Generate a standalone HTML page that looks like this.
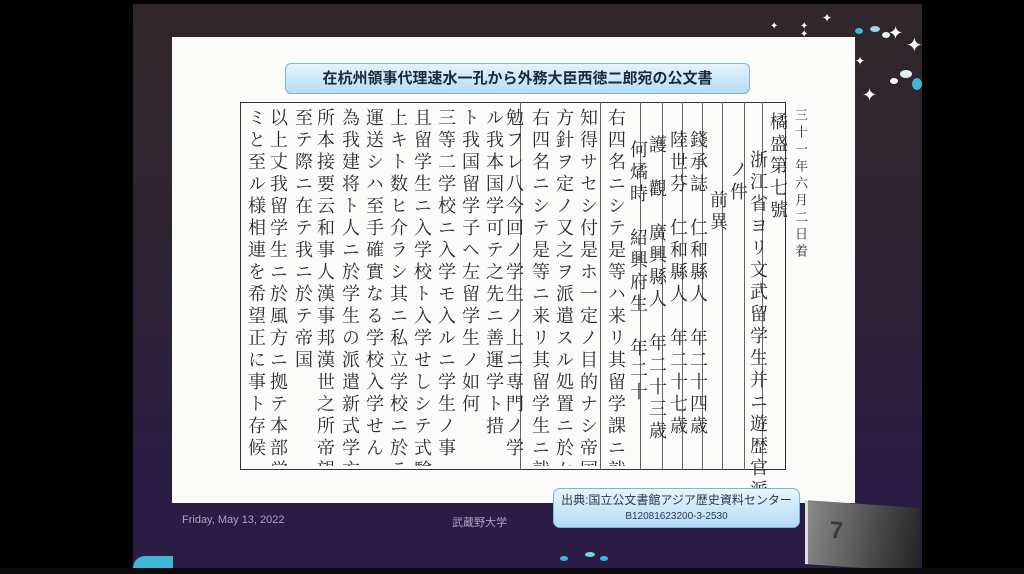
<!DOCTYPE html>
<html><head><meta charset="utf-8"><style>
*{margin:0;padding:0;box-sizing:border-box}
body{width:1024px;height:574px;overflow:hidden;background:#000;position:relative;font-family:"Liberation Sans","Noto Sans CJK JP",sans-serif}
.slide{position:absolute;left:133px;top:4px;width:789px;height:564px;background:linear-gradient(#2f2729 0%,#2d2430 40%,#2a1d42 80%,#2b1c45 100%)}
.doc{position:absolute;left:172px;top:37px;width:683px;height:466px;background:#fbfbfa}
.title{position:absolute;left:285px;top:63px;width:465px;height:31px;border:1px solid #7fb3d8;border-radius:6px;background:linear-gradient(#e6f3fc,#b5dcf4);font-weight:bold;font-size:15px;color:#1e2a3a;text-align:center;line-height:29px}
.frame{position:absolute;left:240px;top:102px;width:546px;height:368px;border:1px solid #333}
.col{position:absolute;top:108px;height:358px;writing-mode:vertical-rl;font-family:"Noto Serif CJK SC",serif;font-size:18px;color:#2a2a2a;letter-spacing:4px;overflow:hidden;white-space:nowrap}
.vl{position:absolute;top:102px;width:1px;height:368px;background:#666}
.foot{position:absolute;top:514px;font-size:11px;color:#a9a2c0}
.src{position:absolute;left:553px;top:488px;width:247px;height:40px;border:1px solid #7fb3d8;border-radius:7px;background:linear-gradient(#e8f4fc,#b4dbf3);text-align:center;color:#2b3a55;font-size:12px;line-height:15px;padding-top:4px}
.num{position:absolute;left:805px;top:504px;width:115px;height:64px;background:linear-gradient(100deg,#8a8a8a,#4a4a4a 60%,#222);border-left:3px solid #ddd;transform:skewY(4deg)}
.num span{position:absolute;left:22px;top:15px;font-size:24px;font-weight:bold;color:#3a3a3a}
.star{position:absolute;color:#fff;font-size:14px;line-height:1}
.dot{position:absolute;border-radius:50%;background:#3fb7d3}
</style></head><body>
<div class="slide"></div>
<div class="doc"></div>
<div class="title">在杭州領事代理速水一孔から外務大臣西徳二郎宛の公文書</div>
<div class="frame"></div>
<div class="vl" style="left:520px"></div><div class="vl" style="left:600px"></div><div class="vl" style="left:640px"></div><div class="vl" style="left:662px"></div><div class="vl" style="left:682px"></div><div class="vl" style="left:702px"></div><div class="vl" style="left:722px"></div><div class="vl" style="left:744px"></div><div class="vl" style="left:762px"></div>
<div class="col" style="left:244px">ミと至ル様相連を希望正に事ト存候</div>
<div class="col" style="left:266px">以上丈我留学生ニ於風方ニ拠テ本部学生</div>
<div class="col" style="left:291px">至テ際ニ在テ我ニ於テ帝国</div>
<div class="col" style="left:313px">所本接要云和事人漢事邦漢世之所帝望</div>
<div class="col" style="left:338px">為我建将ト人ニ於学生の派遣新式学方</div>
<div class="col" style="left:362px">運送シハ至手確實なる学校入学せん</div>
<div class="col" style="left:386px">上キト数ヒ介ラシ其ニ私立学校ニ於テ</div>
<div class="col" style="left:410px">且留学生ニ入学校ト入学せしシテ式験</div>
<div class="col" style="left:434px">三等二学校ニ入学モ入ルニ学生ノ事</div>
<div class="col" style="left:458px">ト我国留学子ヘ左留学生ノ如何</div>
<div class="col" style="left:482px">ル我本国学可テ之先ニ善運学ト措</div>
<div class="col" style="left:502px">勉フレ八今回ノ学生ノ上ニ専門ノ学</div>
<div class="col" style="left:528px">右四名ニシテ是等ニ来リ其留学生ニ就テ</div>
<div class="col" style="left:552px">方針ヲ定ノ又之ヲ派遣スル処置ニ於ケ外国</div>
<div class="col" style="left:576px">知得サセシ付是ホ一定ノ目的ナシ帝国</div>
<div class="col" style="left:604px">右四名ニシテ是等ハ来リ其留学課ニ就テ</div>
<div class="col" style="left:626px;top:140px">何燏時　紹興府生　年二十</div>
<div class="col" style="left:645px;top:135px">護　觀　廣興縣人　年二十三歳</div>
<div class="col" style="left:666px;top:130px">陸世芬　仁和縣人　年二十七歳</div>
<div class="col" style="left:686px;top:130px">錢承誌　仁和縣人　年二十四歳</div>
<div class="col" style="left:706px;top:190px">前異</div>
<div class="col" style="left:726px;top:160px">ノ件</div>
<div class="col" style="left:746px;top:150px">浙江省ヨリ文武留学生并ニ遊歴官派生</div>
<div class="col" style="left:766px;top:112px">橘盛第七號</div>
<div class="col" style="left:792px;font-size:13px">三十一年六月二日着</div>
<div class="foot" style="left:182px">Friday, May 13, 2022</div>
<div class="foot" style="left:452px">武蔵野大学</div>
<div class="src">出典:国立公文書館アジア歴史資料センター<br><span style="font-size:10px">B12081623200-3-2530</span></div>
<div class="num"><span>7</span></div>
<div class="star" style="left:888px;top:24px;font-size:18px">✦</div>
<div class="star" style="left:906px;top:36px;font-size:20px">✦</div>
<div class="star" style="left:862px;top:86px;font-size:18px">✦</div>
<div class="star" style="left:800px;top:22px;font-size:10px">✦</div>
<div class="star" style="left:822px;top:12px;font-size:12px">✦</div>
<div class="star" style="left:800px;top:30px;font-size:10px">✦</div>
<div class="star" style="left:770px;top:22px;font-size:10px">✦</div>
<div class="star" style="left:855px;top:55px;font-size:12px">✦</div>
<div class="dot" style="left:855px;top:28px;width:8px;height:6px"></div>
<div class="dot" style="left:870px;top:26px;width:10px;height:6px;background:#9ed6e6"></div>
<div class="dot" style="left:882px;top:32px;width:8px;height:6px;background:#e8f4f8"></div>
<div class="dot" style="left:900px;top:70px;width:12px;height:8px;background:#e0f0f4"></div>
<div class="dot" style="left:912px;top:78px;width:10px;height:12px"></div>
<div class="dot" style="left:890px;top:78px;width:8px;height:6px;background:#fff"></div>
<div class="dot" style="left:560px;top:556px;width:8px;height:5px"></div>
<div class="dot" style="left:585px;top:552px;width:10px;height:5px;background:#7fd0e0"></div>
<div class="dot" style="left:600px;top:556px;width:8px;height:5px"></div>
<div style="position:absolute;left:133px;top:556px;width:40px;height:12px;background:#3fb7d3;border-radius:40px 0 0 0"></div>
<div style="position:absolute;left:0;top:568px;width:1024px;height:6px;background:#0b0b0b"></div>
</body></html>
